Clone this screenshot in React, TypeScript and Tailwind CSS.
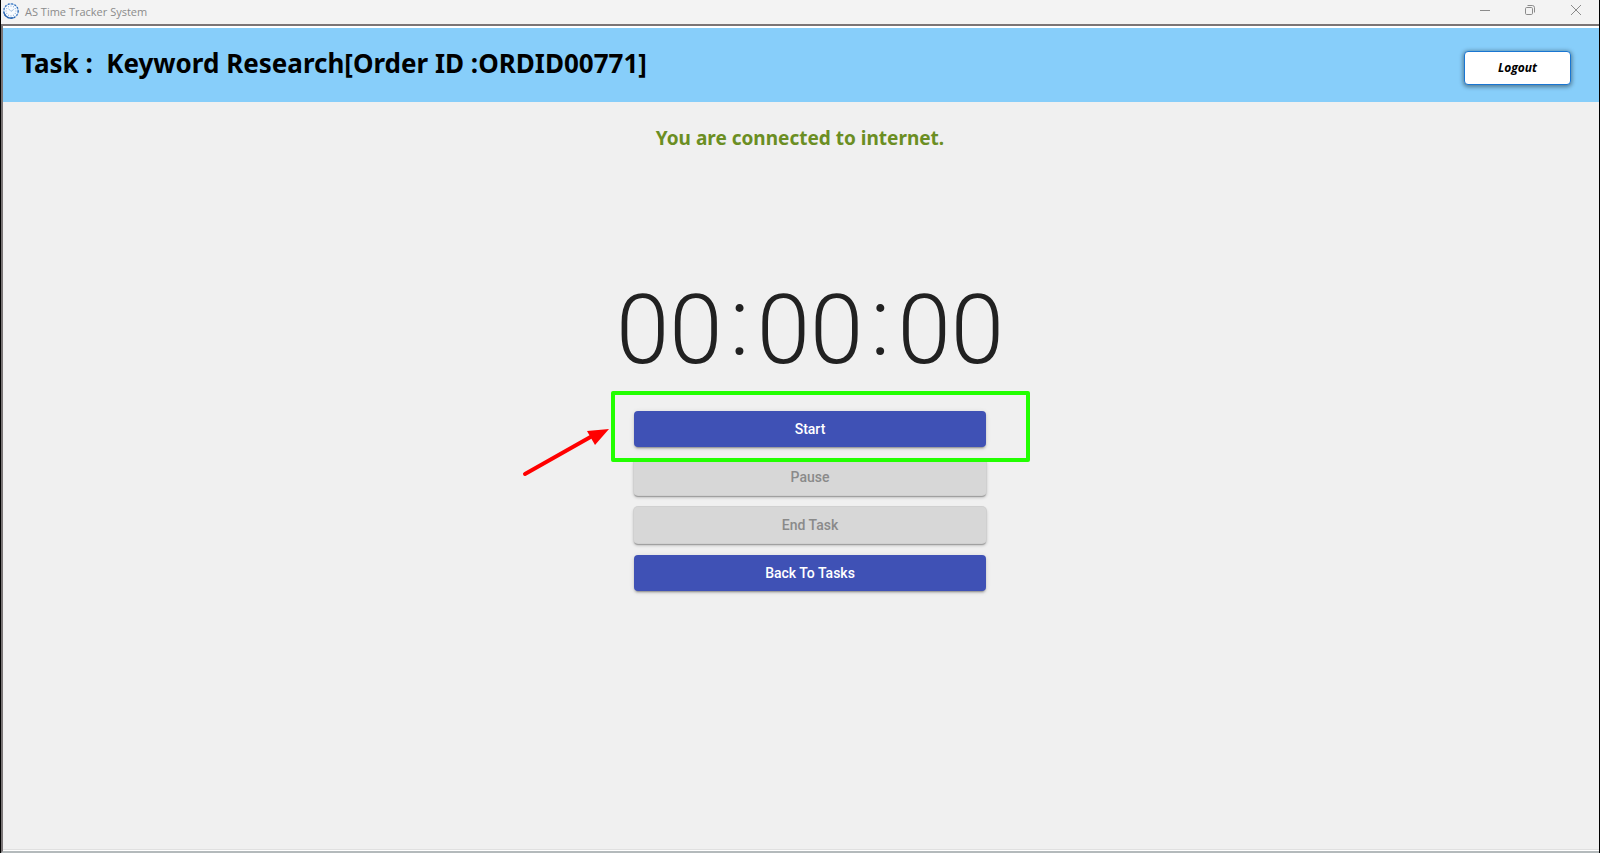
import React from "react";

function AppIcon() {
  const ticks = Array.from({ length: 12 }, (_, i) => i * 30);
  return (
    <svg className="size-4 shrink-0" viewBox="0 0 16 16" aria-hidden="true">
      <circle cx="8" cy="8" r="7.2" fill="#f8fbfe" stroke="#a9c8ea" strokeWidth="1.2" />
      <circle cx="8" cy="8" r="7.2" fill="none" stroke="#2a69b8" strokeWidth="1.3" strokeDasharray="1.6 1.8" />
      <path d="M0.9 9.5a7.2 7.2 0 0 0 9.6 5.2" fill="none" stroke="#2a64ad" strokeWidth="1.3" />
      {ticks.map((angle) => (
        <path key={angle} d="M8 2.6v1" stroke="#7ea6d6" strokeWidth="0.9" transform={`rotate(${angle} 8 8)`} />
      ))}
      <path d="M8 8.4 5.4 5.6M8 8.4l2.8-2" stroke="#8fb0d6" strokeWidth="0.8" />
    </svg>
  );
}

function TitleBar() {
  return (
    <div className="flex h-6 items-center justify-between bg-[#f3f3f3] pl-0.5 text-[#8b8b8b]">
      <div className="flex items-center gap-1.5 pb-0.5">
        <AppIcon />
        <span className="pt-0.5 font-['Open_Sans','Noto_Sans',sans-serif] text-[11px] leading-4">AS Time Tracker System</span>
      </div>
      <div className="flex items-center pb-1">
        <button type="button" aria-label="Minimize" className="flex h-5 w-11 items-center justify-center">
          <svg className="size-3" viewBox="0 0 12 12" stroke="currentColor" fill="none"><path d="M1 6.5h10" /></svg>
        </button>
        <button type="button" aria-label="Restore" className="flex h-5 w-[46px] items-center justify-center">
          <svg className="size-3" viewBox="0 0 12 12" stroke="currentColor" fill="none">
            <rect x="1.5" y="3.5" width="7" height="7" rx="1.2" />
            <path d="M3.5 1.5h4.8a2.2 2.2 0 0 1 2.2 2.2v4.8" />
          </svg>
        </button>
        <button type="button" aria-label="Close" className="flex h-5 w-[46px] items-center justify-center">
          <svg className="size-3" viewBox="0 0 12 12" stroke="currentColor" fill="none"><path d="m1 1 10 10M11 1 1 11" /></svg>
        </button>
      </div>
    </div>
  );
}

function TaskButton({ children, disabled = false }: { children: React.ReactNode; disabled?: boolean }) {
  return (
    <button
      type="button"
      disabled={disabled}
      className="h-9 w-full rounded bg-[#3f51b5] font-[Roboto,sans-serif] text-sm font-medium text-white shadow-[0_3px_1px_-2px_rgba(0,0,0,0.2),0_2px_2px_0_rgba(0,0,0,0.14),0_1px_5px_0_rgba(0,0,0,0.12)] disabled:bg-[#d7d7d7] disabled:text-[#8a8a8a] disabled:shadow-[0_0_0_1px_#d0d0d0,0_2px_1px_0_rgba(0,0,0,0.25),0_2px_3px_1px_rgba(0,0,0,0.16)]"
    >
      {children}
    </button>
  );
}

function StartHighlight() {
  return (
    <div className="pointer-events-none absolute -top-5 -right-11 -bottom-[15px] -left-[23px] rounded-xs border-4 border-[#22ff00]">
      <svg className="absolute top-7 -left-24 h-14 w-24" viewBox="0 0 96 56" fill="none" aria-hidden="true">
        <path d="M6 51 75 12" stroke="#ff0000" strokeWidth="4" strokeLinecap="round" />
        <path d="M68 8 90 6 76 22Z" fill="#ff0000" />
      </svg>
    </div>
  );
}

export default function App() {
  return (
    <div className="flex min-h-screen flex-col border-x border-black bg-[#f3f3f3]">
      <TitleBar />
      <div className="flex grow flex-col border-t-2 border-b-2 border-l-2 border-t-[#7a7576] border-b-[#b4babc] border-l-[#7a7576] bg-white pt-0.5 pb-px">
        <div className="flex grow flex-col border-b border-[#e0e0e0] bg-[#f0f0f0]">
          <header className="flex h-[74px] items-center justify-between bg-[#87cefa] pr-7 pl-[18px]">
            <h1 className="pb-1 font-['Noto_Sans',sans-serif] text-[26px] leading-8 font-bold whitespace-pre text-black">
              {"Task :  Keyword Research[Order ID :ORDID00771]"}
            </h1>
            <button
              type="button"
              className="mt-1.5 h-[34px] w-[107px] rounded border border-[#1976d2] bg-white font-['Open_Sans',sans-serif] text-xs font-bold text-black italic shadow-[0_1px_4px_1px_rgba(0,0,0,0.4)]"
            >
              Logout
            </button>
          </header>
          <main className="flex flex-col items-center">
            <p className="mt-5 pr-0.5 font-['Noto_Sans',sans-serif] text-[19px] leading-8 font-bold text-[#6b8e23]">
              You are connected to internet.
            </p>
            <section className="ml-[18px] flex flex-col items-center pt-[120px]">
              <div
                role="timer"
                className="flex items-center gap-[7px] font-[Roboto,sans-serif] text-[96px] leading-[112px] font-light text-[#212121]"
              >
                <span>00</span>
                <span className="-mt-4">:</span>
                <span>00</span>
                <span className="-mt-4">:</span>
                <span>00</span>
              </div>
              <div className="mt-[25px] flex w-[352px] flex-col gap-3">
                <div className="relative z-10">
                  <TaskButton>Start</TaskButton>
                  <StartHighlight />
                </div>
                <TaskButton disabled>Pause</TaskButton>
                <TaskButton disabled>End Task</TaskButton>
                <TaskButton>Back To Tasks</TaskButton>
              </div>
            </section>
          </main>
        </div>
      </div>
    </div>
  );
}
